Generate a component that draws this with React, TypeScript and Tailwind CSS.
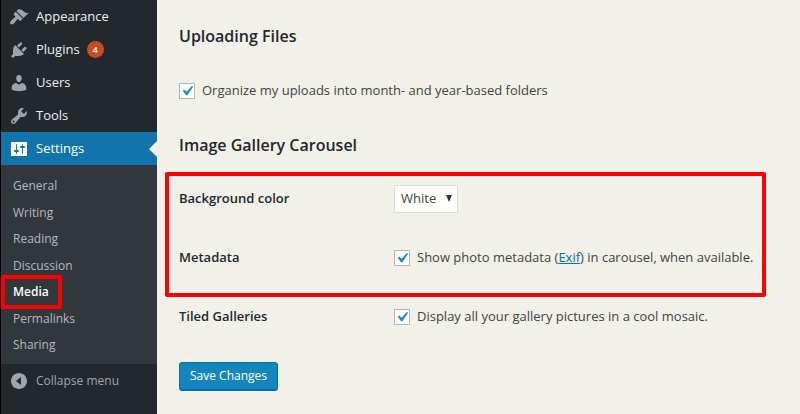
import { useState } from 'react';
import type { ReactNode } from 'react';
import { clsx } from 'clsx';

const icons = {
  appearance:
    'M14.48 11.06L7.41 3.99l1.5-1.5c.5-.56 2.3-.47 3.51.32 1.21.8 1.43 1.28 2.91 2.1 1.18.64 2.45 1.26 4.45.85zm-.71.71L6.7 4.7 4.93 6.47c-.39.39-.39 1.02 0 1.41l1.06 1.06c.39.39.39 1.03 0 1.42-.6.6-1.43 1.11-2.21 1.69-.35.26-.7.53-1.01.84C1.43 14.23.4 16.08 1.4 17.07c.99 1 2.84-.03 4.18-1.36.31-.31.58-.66.85-1.02.57-.78 1.08-1.61 1.69-2.21.39-.39 1.02-.39 1.41 0l1.06 1.06c.39.39 1.02.39 1.41 0z',
  plugins:
    'M13.11 4.36L9.87 7.6 8 5.73l3.24-3.24c.35-.34 1.05-.2 1.56.32.52.51.66 1.21.31 1.55zm-8 1.77l.91-1.12 9.01 9.01-1.19.84c-.71.71-2.63 1.16-3.82 1.16H6.14L4.9 17.26c-.59.59-1.54.59-2.12 0-.59-.58-.59-1.53 0-2.12l1.24-1.24v-3.88c0-1.13.4-3.19 1.09-3.89zm7.26 3.97l3.24-3.24c.34-.35 1.04-.21 1.55.31.52.51.66 1.21.31 1.55l-3.24 3.25z',
  users:
    'M10 9.25c-2.27 0-2.73-3.44-2.73-3.44C7 4.02 7.82 2 9.97 2c2.16 0 2.98 2.02 2.71 3.81 0 0-.41 3.44-2.68 3.44zm0 2.57L12.72 10c2.39 0 4.52 2.33 4.52 4.53v2.49s-3.65 1.13-7.24 1.13c-3.65 0-7.24-1.13-7.24-1.13v-2.49c0-2.25 1.94-4.48 4.47-4.48z',
  tools:
    'M16.68 9.77c-1.34 1.34-3.3 1.67-4.95.99l-5.41 6.52c-.99.99-2.59.99-3.58 0s-.99-2.59 0-3.57l6.52-5.42c-.68-1.65-.35-3.61.99-4.95 1.28-1.28 3.12-1.62 4.72-1.06l-2.89 2.89 2.82 2.82 2.86-2.87c.53 1.58.18 3.39-1.08 4.65zM3.81 16.21c.4.39 1.04.39 1.43 0 .4-.4.4-1.04 0-1.43-.39-.4-1.03-.4-1.43 0-.39.39-.39 1.03 0 1.43z',
  settings:
    'M18 16V4c0-.55-.45-1-1-1H3c-.55 0-1 .45-1 1v12c0 .55.45 1 1 1h14c.55 0 1-.45 1-1zM8 11h1c.55 0 1 .45 1 1s-.45 1-1 1H8v1.5c0 .28-.22.5-.5.5s-.5-.22-.5-.5V13H6c-.55 0-1-.45-1-1s.45-1 1-1h1V5.5c0-.28.22-.5.5-.5s.5.22.5.5V11zm5-2h-1c-.55 0-1-.45-1-1s.45-1 1-1h1V5.5c0-.28.22-.5.5-.5s.5.22.5.5V7h1c.55 0 1 .45 1 1s-.45 1-1 1h-1v5.5c0 .28-.22.5-.5.5s-.5-.22-.5-.5V9z',
  collapse: 'M10 2c4.42 0 8 3.58 8 8s-3.58 8-8 8-8-3.58-8-8 3.58-8 8-8zm2 12V6l-5 4z',
  check: 'M14.83 4.89l1.34.94-5.81 8.38H9.02L5.78 9.67l1.34-1.25 2.57 2.4z',
};

const menu: { label: string; icon: keyof typeof icons; count?: number }[] = [
  { label: 'Appearance', icon: 'appearance' },
  { label: 'Plugins', icon: 'plugins', count: 4 },
  { label: 'Users', icon: 'users' },
  { label: 'Tools', icon: 'tools' },
  { label: 'Settings', icon: 'settings' },
];

const submenu = ['General', 'Writing', 'Reading', 'Discussion', 'Media', 'Permalinks', 'Sharing'];

function Icon({ name, className }: { name: keyof typeof icons; className?: string }) {
  return (
    <svg viewBox="0 0 20 20" className={clsx('shrink-0 fill-current', className)} aria-hidden="true">
      <path fillRule="evenodd" d={icons[name]} />
    </svg>
  );
}

function Sidebar() {
  return (
    <nav className="w-[157px] shrink-0 border-l border-black bg-[#23282d] text-[#eee]">
      <ul>
        {menu.map(({ label, icon, count }) => {
          const active = label === 'Settings';
          return (
            <li key={label}>
              <a
                href="#"
                className={clsx(
                  'relative flex h-[33px] items-center gap-[7px] pl-2 text-[13px]',
                  active && 'bg-[#1274ac] text-white'
                )}
              >
                <Icon name={icon} className={clsx('size-5', active ? 'text-white' : 'text-[#9ea3a8]')} />
                {label}
                {count && (
                  <span className="flex size-[17px] items-center justify-center rounded-full bg-[#ca4a1f] text-[9px] font-semibold text-white">
                    {count}
                  </span>
                )}
                {active && (
                  <svg viewBox="0 0 8 16" className="absolute right-0 h-4 w-2 fill-[#f1f0e9]" aria-hidden="true">
                    <path d="M8 0v16L0 8z" />
                  </svg>
                )}
              </a>
            </li>
          );
        })}
      </ul>

      <ul className="flex h-[199px] flex-col justify-between bg-[#32373c] pt-2 pb-1.5 text-xs text-[#b4b9be]">
        {submenu.map((label) => (
          <li key={label}>
            <a
              href="#"
              className={clsx('relative flex h-[26px] items-center pl-3', label === 'Media' && 'font-semibold text-white')}
            >
              {label}
              {label === 'Media' && <span className="absolute -inset-y-1 left-0 w-[61px] rounded-xs border-4 border-[#fe0000]" />}
            </a>
          </li>
        ))}
      </ul>

      <button type="button" className="flex h-[34px] w-full items-center gap-[7px] pl-2 text-xs text-[#a0a5aa]">
        <Icon name="collapse" className="size-5" />
        Collapse menu
      </button>
    </nav>
  );
}

function Checkbox({ children }: { children: ReactNode }) {
  const [checked, setChecked] = useState(true);

  return (
    <label className="flex items-center gap-[7px] text-[13px]">
      <span className="relative flex size-4 shrink-0">
        <input
          type="checkbox"
          checked={checked}
          onChange={(e) => setChecked(e.target.checked)}
          className="size-full appearance-none border border-[#b4b9be] bg-[#fffffb]"
        />
        {checked && (
          <Icon name="check" className="pointer-events-none absolute -inset-0.5 size-5 text-[#1e8cbe]" />
        )}
      </span>
      <span>{children}</span>
    </label>
  );
}

function Row({ label, htmlFor, children }: { label: string; htmlFor?: string; children: ReactNode }) {
  return (
    <div className="flex h-[59px] items-center">
      <div className="w-[215px] shrink-0 text-[13px] font-semibold text-[#23282d]">
        {htmlFor ? <label htmlFor={htmlFor}>{label}</label> : label}
      </div>
      {children}
    </div>
  );
}

export default function App() {
  const [color, setColor] = useState('White');

  return (
    <div className="flex min-h-screen bg-[#f1f0e9] font-['Open_Sans','Noto_Sans',sans-serif] text-[#444]">
      <Sidebar />
      <main className="min-w-0 flex-1 pt-6 pr-[34px] pl-[22px]">
        <h2 className="text-base leading-6 font-semibold text-[#23282d]">Uploading Files</h2>
        <div className="flex h-[85px] items-center">
          <Checkbox>Organize my uploads into month- and year-based folders</Checkbox>
        </div>

        <h2 className="text-base leading-6 font-semibold text-[#23282d]">Image Gallery Carousel</h2>
        <div className="relative mt-3">
          <Row label="Background color" htmlFor="background">
            <span className="relative flex items-center">
              <select
                id="background"
                value={color}
                onChange={(e) => setColor(e.target.value)}
                className="h-7 w-16 appearance-none border border-[#ddd] bg-[#fffffb] pl-1.5 text-[13px] text-[#444]"
              >
                <option>White</option>
                <option>Black</option>
              </select>
              <svg viewBox="0 0 6 7" className="pointer-events-none absolute right-1.5 h-[7px] w-1.5 fill-[#333]" aria-hidden="true">
                <path d="M0 0h6L3 7z" />
              </svg>
            </span>
          </Row>
          <Row label="Metadata">
            <Checkbox>
              Show photo metadata (
              <a href="#" className="text-[#0073aa] underline">
                Exif
              </a>
              ) in carousel, when available.
            </Checkbox>
          </Row>
          <div className="pointer-events-none absolute top-[3px] right-0 -bottom-2.5 -left-3.5 rounded-xs border-4 border-[#fe0000]" />
        </div>
        <Row label="Tiled Galleries">
          <Checkbox>Display all your gallery pictures in a cool mosaic.</Checkbox>
        </Row>

        <button
          type="button"
          className="mt-4 h-7 rounded-[3px] border border-[#0b6ea3] bg-[#1485bd] px-2.5 text-xs text-white shadow-[0_1px_0_#0b6ea3]"
        >
          Save Changes
        </button>
      </main>
    </div>
  );
}
